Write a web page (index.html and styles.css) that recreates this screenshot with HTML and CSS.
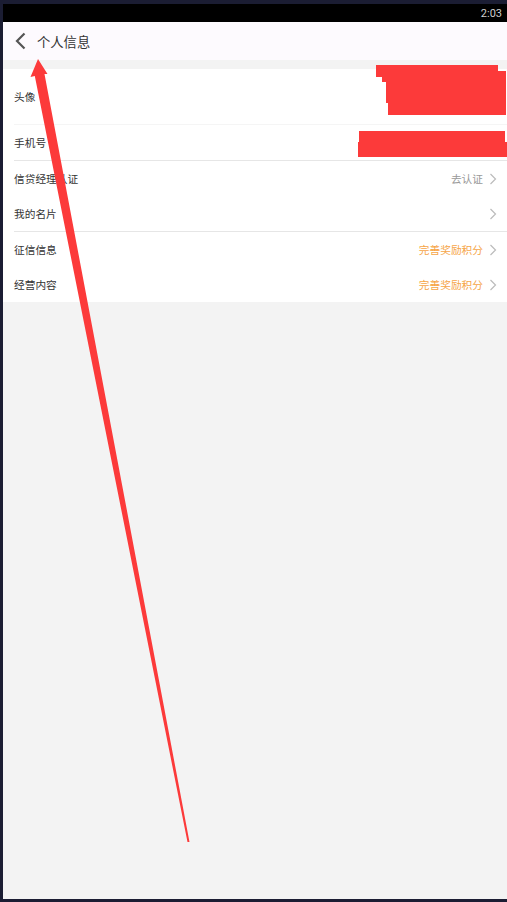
FILE: index.html
```html
<!DOCTYPE html>
<html lang="zh">
<head>
<meta charset="utf-8">
<title>个人信息</title>
<link rel="stylesheet" href="styles.css">
</head>
<body>
<div class="screen">
  <div class="statusbar"><span class="time">2:03</span></div>
  <div class="header">
    <svg class="back" width="14" height="18" viewBox="0 0 14 18"><path d="M10.5 1.5 L3 9 L10.5 16.5" fill="none" stroke="#555" stroke-width="2.2"/></svg>
    <span class="title">个人信息</span>
  </div>
  <div class="list">
    <div class="group">
      <div class="row row-avatar"><span class="label">头像</span></div>
      <div class="divider faint"></div>
      <div class="row"><span class="label">手机号</span></div>
    </div>
    <div class="divider"></div>
    <div class="group">
      <div class="row"><span class="label">信贷经理认证</span><span class="value gray">去认证</span><svg class="chev" width="8" height="12" viewBox="0 0 8 12"><path d="M1.5 1 L6.5 6 L1.5 11" fill="none" stroke="#bbb" stroke-width="1.2"/></svg></div>
      <div class="row"><span class="label">我的名片</span><span class="value"></span><svg class="chev" width="8" height="12" viewBox="0 0 8 12"><path d="M1.5 1 L6.5 6 L1.5 11" fill="none" stroke="#bbb" stroke-width="1.2"/></svg></div>
    </div>
    <div class="divider"></div>
    <div class="group">
      <div class="row"><span class="label">征信信息</span><span class="value orange">完善奖励积分</span><svg class="chev" width="8" height="12" viewBox="0 0 8 12"><path d="M1.5 1 L6.5 6 L1.5 11" fill="none" stroke="#bbb" stroke-width="1.2"/></svg></div>
      <div class="row"><span class="label">经营内容</span><span class="value orange">完善奖励积分</span><svg class="chev" width="8" height="12" viewBox="0 0 8 12"><path d="M1.5 1 L6.5 6 L1.5 11" fill="none" stroke="#bbb" stroke-width="1.2"/></svg></div>
    </div>
  </div>
  <svg class="overlay" width="507" height="902" viewBox="0 0 507 902">
    <g fill="#fc3a3a">
      <rect x="376" y="65" width="122" height="12"/>
      <rect x="382" y="71" width="124" height="11"/>
      <rect x="386" y="82" width="120" height="21"/>
      <rect x="388" y="102" width="118" height="13"/>
      <rect x="359" y="131" width="146" height="12"/>
      <rect x="358" y="142" width="149" height="15"/>
      <polygon points="38,59 30.5,77 34.8,76 187.5,842 189.5,842 44.5,74 47.5,74"/>
    </g>
  </svg>
</div>
</body>
</html>
```

FILE: styles.css
```css
html, body {
  margin: 0;
  padding: 0;
  background: #1b1d33;
}
body {
  font-family: "Noto Sans CJK SC", "Noto Sans", sans-serif;
  width: 507px;
  height: 902px;
  overflow: hidden;
}
.screen {
  position: relative;
  margin: 4px 0 0 3px;
  height: 895px;
  background: #f3f3f3;
  display: flex;
  flex-direction: column;
}
.statusbar {
  height: 18px;
  background: #000;
  display: flex;
  justify-content: flex-end;
  align-items: center;
  padding-right: 5px;
}
.time {
  font-family: Roboto, "Liberation Sans", sans-serif;
  font-size: 11px;
  color: #cfcfcf;
  line-height: 1;
}
.header {
  height: 38px;
  background: #fdfafe;
  display: flex;
  align-items: center;
  padding-left: 11px;
  gap: 9px;
  margin-bottom: 9px;
}
.title {
  font-size: 13.3px;
  color: #333;
}
.list {
  background: #fff;
  display: flex;
  flex-direction: column;
}
.row {
  height: 35px;
  display: flex;
  align-items: center;
  padding: 0 10px 0 11px;
}
.row-avatar {
  height: 55px;
}
.label {
  font-size: 10.7px;
  color: #333;
  flex: 1;
}
.value {
  font-size: 10.7px;
}
.gray { color: #999; }
.orange { color: #f6a547; }
.chev {
  margin-left: 6px;
}
.divider {
  height: 1px;
  margin-left: 11px;
  background: #e6e6e6;
}
.divider.faint {
  background: #f5f5f5;
}
.overlay {
  position: absolute;
  left: -3px;
  top: -4px;
  pointer-events: none;
}
```
